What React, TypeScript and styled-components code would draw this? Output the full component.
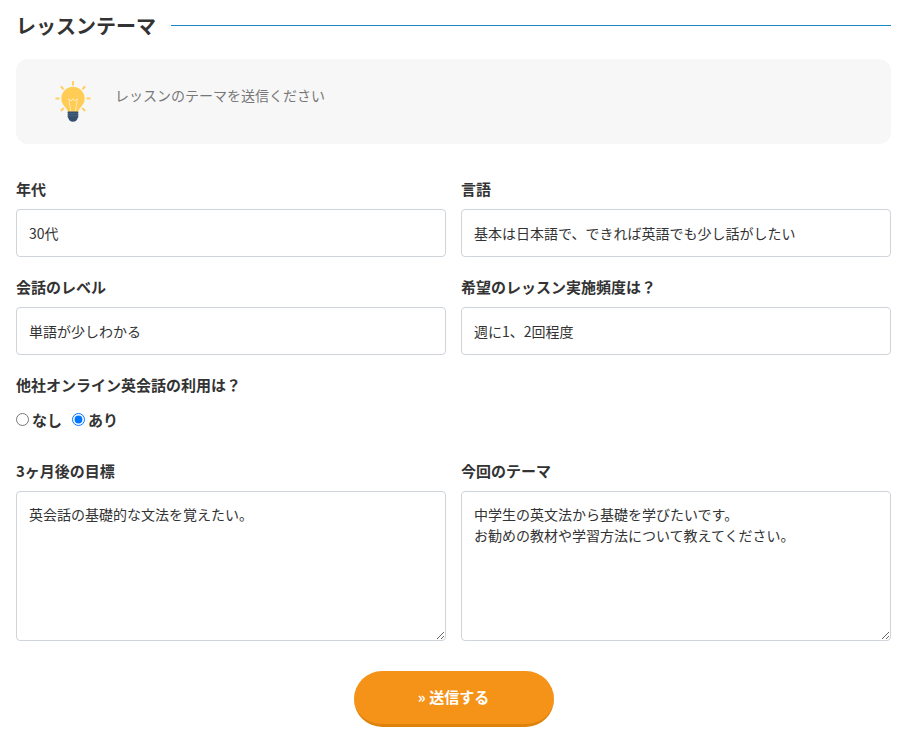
import styled, { createGlobalStyle } from 'styled-components'

const GlobalStyle = createGlobalStyle`
  html, body {
    margin: 0;
    padding: 0;
    background: #fff;
  }
  body {
    font-family: "Noto Sans CJK JP", "Noto Sans", sans-serif;
    font-size: 14px;
    color: #333;
  }
`

const Page = styled.form`
  padding: 0 16px;
  height: 745px;
  box-sizing: border-box;
  overflow: hidden;
`

const TitleRow = styled.div`
  display: flex;
  align-items: center;
  gap: 15px;
  height: 52px;
`

const Title = styled.h2`
  margin: 0;
  font-size: 20px;
  line-height: 28px;
  font-weight: 700;
  color: #333;
  white-space: nowrap;
`

const TitleRule = styled.span`
  flex: 1;
  height: 1px;
  margin-bottom: 2px;
  background: #1c86c2;
`

const Notice = styled.div`
  display: flex;
  align-items: center;
  gap: 24px;
  height: 85px;
  margin-top: 7px;
  padding: 0 0 0 39px;
  background: #f7f7f7;
  border-radius: 12px;
`

const NoticeText = styled.p`
  margin: 0 0 14px;
  font-size: 14px;
  line-height: 20px;
  color: #777;
`

const Grid = styled.div`
  display: grid;
  grid-template-columns: 430px 430px;
  column-gap: 15px;
  margin-top: 32px;
`

const Field = styled.div<{ $full?: boolean }>`
  ${p => (p.$full ? 'grid-column: 1 / -1;' : '')}
  margin-bottom: 17px;
`

const Label = styled.label`
  display: block;
  height: 33px;
  font-size: 15px;
  line-height: 25px;
  font-weight: 700;
  color: #333;
`

const Input = styled.input`
  display: block;
  box-sizing: border-box;
  width: 100%;
  height: 48px;
  padding: 0 12px;
  border: 1px solid #ced4da;
  border-radius: 4px;
  background: #fff;
  font: inherit;
  font-size: 14px;
  color: #333;
  outline: none;
`

const TextArea = styled.textarea`
  display: block;
  box-sizing: border-box;
  width: 100%;
  height: 150px;
  padding: 12px 12px;
  border: 1px solid #ced4da;
  border-radius: 4px;
  background: #fff;
  font: inherit;
  font-size: 14px;
  line-height: 21px;
  color: #333;
  outline: none;
`

const RadioRow = styled.div`
  display: flex;
  align-items: center;
  gap: 10px;
  height: 29px;
  margin-bottom: 7px;
`

const RadioLabel = styled.label`
  display: flex;
  align-items: center;
  gap: 3px;
  font-size: 15px;
  font-weight: 700;
  color: #333;
`

const Radio = styled.input`
  width: 13px;
  height: 13px;
  margin: 0;
`

const Actions = styled.div`
  display: flex;
  justify-content: center;
  margin-top: 13px;
`

const SubmitButton = styled.button`
  width: 200px;
  height: 56px;
  padding: 0 0 2px;
  border: 0;
  border-bottom: 3px solid #dd830c;
  border-radius: 28px;
  background: #f59318;
  color: #fff;
  font: inherit;
  font-size: 15px;
  font-weight: 700;
`

const Bulb = () => (
  <svg width="36" height="42" viewBox="0 0 36 42" aria-hidden="true">
    <g stroke="#ffd062" strokeWidth="2">
      <path d="M18 0v4.500" />
      <path d="M5.800 5.300l2.800 3" />
      <path d="M30.200 5.300l-2.800 3" />
      <path d="M0.500 17.500h4" />
      <path d="M31.500 17.500h4" />
      <path d="M5.800 30l3-3" />
      <path d="M30.200 30l-3-3" />
    </g>
    <path
      d="M18 5.800c-6.500 0-11.700 5.200-11.700 11.700 0 3.600 1.700 6.200 3.500 8.200 1.400 1.500 2.700 3 2.900 5.300h10.600c.2-2.300 1.500-3.800 2.900-5.300 1.800-2 3.500-4.600 3.500-8.200 0-6.500-5.200-11.700-11.700-11.700z"
      fill="#ffcd56"
    />
    <path
      d="M15.700 30l-1.900-12.300 2.300 2.300 2-2.300 2 2.300 2.300-2.300-1.900 12.300"
      fill="none"
      stroke="#ffe9b5"
      strokeWidth="1"
    />
    <path
      d="M13.500 30.500h9c1.100 0 1.200 1.400.5 2 .6.500.6 1.600 0 2.100.6.500.6 1.600-.2 2.100-.7 2.400-2.200 4-4.800 4s-4.100-1.600-4.800-4c-.8-.5-.8-1.600-.2-2.100-.6-.5-.6-1.600 0-2.100-.7-.6-.6-2 .5-2z"
      fill="#35506e"
    />
    <path d="M13 32.700h10M13 34.800h10" stroke="#5f7690" strokeWidth="0.500" />
  </svg>
)

const App = () => (
  <Page onSubmit={e => e.preventDefault()}>
    <GlobalStyle />
    <TitleRow>
      <Title>レッスンテーマ</Title>
      <TitleRule />
    </TitleRow>
    <Notice>
      <Bulb />
      <NoticeText>レッスンのテーマを送信ください</NoticeText>
    </Notice>
    <Grid>
      <Field>
        <Label>年代</Label>
        <Input defaultValue="30代" />
      </Field>
      <Field>
        <Label>言語</Label>
        <Input defaultValue="基本は日本語で、できれば英語でも少し話がしたい" />
      </Field>
      <Field>
        <Label>会話のレベル</Label>
        <Input defaultValue="単語が少しわかる" />
      </Field>
      <Field>
        <Label>希望のレッスン実施頻度は？</Label>
        <Input defaultValue="週に1、2回程度" />
      </Field>
      <Field $full>
        <Label>他社オンライン英会話の利用は？</Label>
        <RadioRow>
          <RadioLabel>
            <Radio type="radio" name="other" />
            なし
          </RadioLabel>
          <RadioLabel>
            <Radio type="radio" name="other" defaultChecked />
            あり
          </RadioLabel>
        </RadioRow>
      </Field>
      <Field>
        <Label>3ヶ月後の目標</Label>
        <TextArea defaultValue="英会話の基礎的な文法を覚えたい。" />
      </Field>
      <Field>
        <Label>今回のテーマ</Label>
        <TextArea defaultValue={'中学生の英文法から基礎を学びたいです。\nお勧めの教材や学習方法について教えてください。'} />
      </Field>
    </Grid>
    <Actions>
      <SubmitButton type="submit">» 送信する</SubmitButton>
    </Actions>
  </Page>
)

export default App
